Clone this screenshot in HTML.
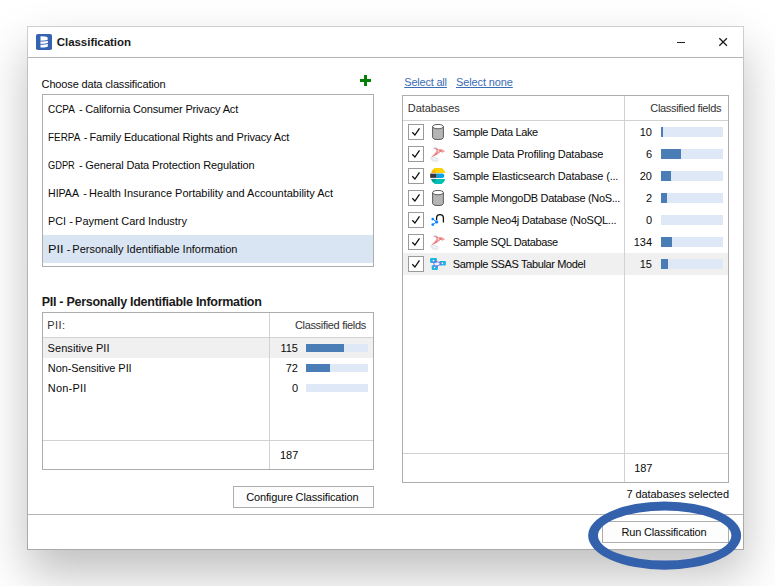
<!DOCTYPE html>
<html><head><meta charset="utf-8"><title>Classification</title>
<style>
html,body{margin:0;padding:0;background:#fff;}
body{width:775px;height:586px;position:relative;overflow:hidden;font-family:"Liberation Sans",sans-serif;font-size:11px;color:#0a0a0a;}
.abs{position:absolute;}
.t{position:absolute;white-space:nowrap;line-height:14px;height:14px;}
#win{left:27px;top:26px;width:715px;height:522px;border:1px solid #b4b4b4;border-image:linear-gradient(to bottom,#d0d0d0 0,#c2c2c2 8%,#b8b8b8 25%,#b0b0b0 60%,#a9a9a9 100%) 1;background:#fff;box-shadow:0 24px 44px rgba(0,0,0,.25);}
.hl{position:absolute;height:1px;background:#b4b4b4;}
.vl{position:absolute;width:1px;background:#d2d2d2;}
.box{position:absolute;border:1px solid #adadad;background:#fff;box-sizing:border-box;}
.bar{position:absolute;background:#dfe8f6;width:62px;}
.bar i{position:absolute;left:0;top:0;bottom:0;background:#4a7db6;display:block;}
.num{position:absolute;text-align:right;white-space:nowrap;line-height:14px;height:14px;}
.cb{position:absolute;width:14px;height:14px;border:1px solid #9a9a9a;background:#fff;}
.btn{position:absolute;box-sizing:border-box;border:1px solid #adadad;background:#fdfdfd;text-align:center;white-space:nowrap;}
a.lnk{color:#3b6db5;text-decoration:underline;}
</style></head><body>
<div id="win" class="abs"></div>

<!-- title bar -->
<svg class="abs" style="left:36px;top:34px" width="16" height="16" viewBox="0 0 16 16">
<rect x="0" y="0" width="16" height="16" rx="1.8" fill="#3563b2"/>
<path d="M4.5 2.2 Q8.6 2 11.3 3.1 Q12 4.6 11.6 6 Q12.2 7.5 11.8 9 Q12.2 11 11.6 12.7 Q8.6 13.7 4.5 13.6 Z" fill="#fff"/>
<path d="M4.3 7.15 Q8.6 7.3 12 6.3 M4.3 10.4 Q8.6 10.4 12 9.45" stroke="#3563b2" stroke-width=".95" fill="none"/>
</svg>
<div class="abs" style="left:677px;top:42px;width:8px;height:1px;background:#222"></div>
<svg class="abs" style="left:718px;top:37px" width="10" height="10" viewBox="0 0 10 10"><path d="M1.3 1.2 L8.9 8.8 M8.9 1.2 L1.3 8.8" stroke="#1a1a1a" stroke-width="1.25" fill="none"/></svg>
<div class="hl" style="left:28px;top:57px;width:715px;"></div>

<!-- left top -->
<svg class="abs" style="left:360px;top:75px" width="11" height="11" viewBox="0 0 11 11" shape-rendering="crispEdges"><path d="M4 0h3v4h4v3h-4v4h-3v-4h-4v-3h4z" fill="#058005"/></svg>
<div class="box" style="left:42px;top:94px;width:332px;height:173px;"></div>
<div class="abs" style="left:43px;top:235px;width:330px;height:28px;background:#d9e5f3"></div>

<!-- left bottom -->
<div class="box" style="left:42px;top:312px;width:332px;height:158px;"></div>
<div class="abs" style="left:43px;top:338px;width:330px;height:20px;background:#f0f0f0"></div>
<div class="hl" style="left:43px;top:337px;width:330px;background:#d2d2d2"></div>
<div class="hl" style="left:43px;top:440px;width:330px;background:#d2d2d2"></div>
<div class="vl" style="left:269px;top:313px;height:156px;"></div>
<div class="num" style="left:270px;width:28px;top:341px;">115</div>
<div class="num" style="left:270px;width:28px;top:361px;">72</div>
<div class="num" style="left:270px;width:28px;top:381px;">0</div>
<div class="bar" style="left:306px;top:344px;height:8px"><i style="width:38px"></i></div>
<div class="bar" style="left:306px;top:364px;height:8px"><i style="width:24px"></i></div>
<div class="bar" style="left:306px;top:384px;height:8px"></div>
<div class="t" style="left:280px;top:448px;">187</div>
<div class="btn" id="b1" style="left:233px;top:486px;width:141px;height:22px;line-height:20px;"></div>

<div class="hl" style="left:28px;top:514px;width:715px;"></div>

<!-- right -->
<div class="box" style="left:402px;top:95px;width:327px;height:388px;"></div>
<div class="abs" style="left:403px;top:253px;width:325px;height:22px;background:#f0f0f0"></div>
<div class="hl" style="left:403px;top:120px;width:325px;background:#d2d2d2"></div>
<div class="hl" style="left:403px;top:453px;width:325px;background:#d2d2d2"></div>
<div class="vl" style="left:624px;top:96px;height:386px;"></div>
<div class="cb" style="left:408px;top:124px"></div>
<svg class="abs" style="left:408px;top:124px" width="16" height="16" viewBox="0 0 16 16"><path d="M4.3 8.3 L6.9 11 L11.5 4.4" fill="none" stroke="#0a0a0a" stroke-width="1.25"/></svg>
<svg class="abs" style="left:430px;top:124px" width="16" height="16" viewBox="0 0 16 16"><path d="M2.6 2.6 V13.6 A5.4 2 0 0 0 13.4 13.6 V2.6 Z" fill="#b5b5b5" stroke="#5c5c5c" stroke-width="1"/><ellipse cx="8" cy="2.6" rx="5.4" ry="2.2" fill="#ffffff" stroke="#5c5c5c" stroke-width="1"/></svg>
<div class="num" style="left:625px;width:27px;top:125px;">10</div>
<div class="bar" style="left:661px;top:127px;height:10px"><i style="width:2px"></i></div>
<div class="cb" style="left:408px;top:146px"></div>
<svg class="abs" style="left:408px;top:146px" width="16" height="16" viewBox="0 0 16 16"><path d="M4.3 8.3 L6.9 11 L11.5 4.4" fill="none" stroke="#0a0a0a" stroke-width="1.25"/></svg>
<svg class="abs" style="left:430px;top:146px" width="16" height="16" viewBox="0 0 16 16"><path d="M3 1.1 Q5 .2 7 1 Q6.8 1.9 5 2 Q3.4 1.9 3 1.1Z" fill="#cfe0ea" opacity=".9"/><path d="M3.1 2 Q5 2.3 6.6 1.9 Q7.6 2.6 8.4 3.4 Q10.4 2.9 12 3.6 Q14 4.4 14.9 6.3 Q13.4 5.6 12.2 5.5 Q13 6.2 13 6.9 Q11.6 5.8 10.2 6 Q8.8 7.4 7.2 8.4 Q5 9.8 2.2 10.9 Q1.6 10.6 1.9 10.2 Q4.6 8 6.3 5.6 Q6.9 4.4 5.4 3.3 Q4 3 3.1 2Z" fill="#e03434" opacity=".68"/><path d="M2 10.4 L8.6 4.2 M4.6 3 L10.4 6.2 M9 3.4 L7.6 8 M11.6 3.8 L12.6 6" stroke="#fff" stroke-width=".55" opacity=".75" fill="none"/><path d="M0 12 Q.8 10.4 3 10.6 Q6 10.6 8 12.4 Q9 14 8 15.4 Q5.6 16.3 3 15.4 Q.4 14.2 0 12Z" fill="#b4c0ce" opacity=".42"/><path d="M.6 12.6 L7.6 13.6 M2.6 10.8 L6.4 15.8 M5.6 11.2 L2.6 15.2" stroke="#fff" stroke-width=".55" opacity=".8" fill="none"/></svg>
<div class="num" style="left:625px;width:27px;top:147px;">6</div>
<div class="bar" style="left:661px;top:149px;height:10px"><i style="width:20px"></i></div>
<div class="cb" style="left:408px;top:168px"></div>
<svg class="abs" style="left:408px;top:168px" width="16" height="16" viewBox="0 0 16 16"><path d="M4.3 8.3 L6.9 11 L11.5 4.4" fill="none" stroke="#0a0a0a" stroke-width="1.25"/></svg>
<svg class="abs" style="left:430px;top:168px" width="16" height="16" viewBox="0 0 16 16"><path d="M1.1 5 A7.3 7.3 0 0 1 15.2 4.4 Q15 5 14.4 5 Z" fill="#fed10a"/><path d="M1.1 5 A7.3 7.3 0 0 1 4.2 1.6 Q6 3 6.2 5 Z" fill="#f9b110"/><path d="M0 5.5 H6.9 V10.1 H0 Q-.3 7.8 0 5.5Z" fill="#343741" stroke="#cfcfd2" stroke-width=".5"/><path d="M6.9 5.4 H12 A2.35 2.35 0 0 1 12 10.1 H6.9 Z" fill="#07a5e6"/><path d="M1.1 10.9 H14.4 Q15 10.9 15.2 11.5 A7.3 7.3 0 0 1 1.1 10.9 Z" fill="#00bfb3"/><path d="M1.1 10.9 H6.2 Q6 13 4.2 14.4 A7.3 7.3 0 0 1 1.1 10.9Z" fill="#019b8f"/></svg>
<div class="num" style="left:625px;width:27px;top:169px;">20</div>
<div class="bar" style="left:661px;top:171px;height:10px"><i style="width:10px"></i></div>
<div class="cb" style="left:408px;top:190px"></div>
<svg class="abs" style="left:408px;top:190px" width="16" height="16" viewBox="0 0 16 16"><path d="M4.3 8.3 L6.9 11 L11.5 4.4" fill="none" stroke="#0a0a0a" stroke-width="1.25"/></svg>
<svg class="abs" style="left:430px;top:190px" width="16" height="16" viewBox="0 0 16 16"><path d="M2.6 2.6 V13.6 A5.4 2 0 0 0 13.4 13.6 V2.6 Z" fill="#b5b5b5" stroke="#5c5c5c" stroke-width="1"/><ellipse cx="8" cy="2.6" rx="5.4" ry="2.2" fill="#ffffff" stroke="#5c5c5c" stroke-width="1"/></svg>
<div class="num" style="left:625px;width:27px;top:191px;">2</div>
<div class="bar" style="left:661px;top:193px;height:10px"><i style="width:6px"></i></div>
<div class="cb" style="left:408px;top:212px"></div>
<svg class="abs" style="left:408px;top:212px" width="16" height="16" viewBox="0 0 16 16"><path d="M4.3 8.3 L6.9 11 L11.5 4.4" fill="none" stroke="#0a0a0a" stroke-width="1.25"/></svg>
<svg class="abs" style="left:430px;top:212px" width="16" height="16" viewBox="0 0 16 16"><path d="M6.6 8 V6.1 A3.4 3.4 0 0 1 13.4 6.1 V10.5" fill="none" stroke="#111" stroke-width="1.3"/><path d="M2.75 7.05 L6.65 9.9 L2.75 12.6" fill="none" stroke="#0b84ff" stroke-width=".9"/><circle cx="2.75" cy="7.05" r="1.35" fill="#0b84ff"/><circle cx="2.75" cy="12.6" r="1.35" fill="#0b84ff"/><circle cx="6.65" cy="9.9" r="1.6" fill="#0b84ff"/></svg>
<div class="num" style="left:625px;width:27px;top:213px;">0</div>
<div class="bar" style="left:661px;top:215px;height:10px"></div>
<div class="cb" style="left:408px;top:234px"></div>
<svg class="abs" style="left:408px;top:234px" width="16" height="16" viewBox="0 0 16 16"><path d="M4.3 8.3 L6.9 11 L11.5 4.4" fill="none" stroke="#0a0a0a" stroke-width="1.25"/></svg>
<svg class="abs" style="left:430px;top:234px" width="16" height="16" viewBox="0 0 16 16"><path d="M3 1.1 Q5 .2 7 1 Q6.8 1.9 5 2 Q3.4 1.9 3 1.1Z" fill="#cfe0ea" opacity=".9"/><path d="M3.1 2 Q5 2.3 6.6 1.9 Q7.6 2.6 8.4 3.4 Q10.4 2.9 12 3.6 Q14 4.4 14.9 6.3 Q13.4 5.6 12.2 5.5 Q13 6.2 13 6.9 Q11.6 5.8 10.2 6 Q8.8 7.4 7.2 8.4 Q5 9.8 2.2 10.9 Q1.6 10.6 1.9 10.2 Q4.6 8 6.3 5.6 Q6.9 4.4 5.4 3.3 Q4 3 3.1 2Z" fill="#e03434" opacity=".68"/><path d="M2 10.4 L8.6 4.2 M4.6 3 L10.4 6.2 M9 3.4 L7.6 8 M11.6 3.8 L12.6 6" stroke="#fff" stroke-width=".55" opacity=".75" fill="none"/><path d="M0 12 Q.8 10.4 3 10.6 Q6 10.6 8 12.4 Q9 14 8 15.4 Q5.6 16.3 3 15.4 Q.4 14.2 0 12Z" fill="#b4c0ce" opacity=".42"/><path d="M.6 12.6 L7.6 13.6 M2.6 10.8 L6.4 15.8 M5.6 11.2 L2.6 15.2" stroke="#fff" stroke-width=".55" opacity=".8" fill="none"/></svg>
<div class="num" style="left:625px;width:27px;top:235px;">134</div>
<div class="bar" style="left:661px;top:237px;height:10px"><i style="width:11px"></i></div>
<div class="cb" style="left:408px;top:256px"></div>
<svg class="abs" style="left:408px;top:256px" width="16" height="16" viewBox="0 0 16 16"><path d="M4.3 8.3 L6.9 11 L11.5 4.4" fill="none" stroke="#0a0a0a" stroke-width="1.25"/></svg>
<svg class="abs" style="left:430px;top:256px" width="16" height="16" viewBox="0 0 16 16"><rect x=".1" y="2.1" width="6.8" height="4.8" rx=".8" fill="#1cb4df"/><rect x="9.5" y="5.1" width="6.4" height="4.5" rx=".8" fill="#1cb4df"/><rect x="1.7" y="9.3" width="6.2" height="4.6" rx=".8" fill="#1cb4df"/><path d="M3.5 4.6 L12.4 7.4 L4.6 11.5 Z" fill="none" stroke="#8b5cf0" stroke-width=".9"/><circle cx="3.5" cy="4.6" r=".8" fill="#fff"/><circle cx="12.4" cy="7.4" r=".8" fill="#fff"/><circle cx="4.6" cy="11.5" r=".8" fill="#fff"/></svg>
<div class="num" style="left:625px;width:27px;top:257px;">15</div>
<div class="bar" style="left:661px;top:259px;height:10px"><i style="width:7px"></i></div>
<div class="t" style="left:634.3px;top:461px;letter-spacing:-0.15px">187</div>
<div class="btn" id="b2" style="left:602px;top:521px;width:127px;height:22px;line-height:20px;"></div>
<svg class="abs" style="left:580px;top:495px" width="170" height="85" viewBox="0 0 170 85"><path fill-rule="evenodd" fill="#3461ac" d="M8.15 40.6 A76.5 34.1 0 1 0 161.15 40.6 A76.5 34.1 0 1 0 8.15 40.6 Z M17.95 40.6 A66.7 25.0 0 1 0 151.35 40.6 A66.7 25.0 0 1 0 17.95 40.6 Z"/></svg>
<div class="t" id="title" style="left:56.71px;top:35px;letter-spacing:-0.034px;font-weight:bold;font-size:11.5px;color:#1a1a1a">Classification</div>
<div class="t" id="choose" style="left:41.60px;top:77px;letter-spacing:-0.149px;">Choose data classification</div>
<div class="t" id="li0a" style="left:48.14px;top:102px;letter-spacing:0.000px;transform:scaleX(0.9038);transform-origin:0 0;">CCPA</div>
<div class="t" id="li0d" style="left:79.03px;top:102px;letter-spacing:0.628px;">-</div>
<div class="t" id="li0b" style="left:85.24px;top:102px;letter-spacing:-0.158px;">California Consumer Privacy Act</div>
<div class="t" id="li1a" style="left:48.16px;top:130px;letter-spacing:0.000px;transform:scaleX(0.8992);transform-origin:0 0;">FERPA</div>
<div class="t" id="li1d" style="left:83.78px;top:130px;letter-spacing:0.528px;">-</div>
<div class="t" id="li1b" style="left:89.56px;top:130px;letter-spacing:-0.157px;">Family Educational Rights and Privacy Act</div>
<div class="t" id="li2a" style="left:48.36px;top:158px;letter-spacing:0.000px;transform:scaleX(0.8411);transform-origin:0 0;">GDPR</div>
<div class="t" id="li2d" style="left:79.03px;top:158px;letter-spacing:0.628px;">-</div>
<div class="t" id="li2b" style="left:85.26px;top:158px;letter-spacing:-0.131px;">General Data Protection Regulation</div>
<div class="t" id="li3a" style="left:47.88px;top:186px;letter-spacing:0.000px;transform:scaleX(0.9630);transform-origin:0 0;">HIPAA</div>
<div class="t" id="li3d" style="left:83.16px;top:186px;letter-spacing:0.628px;">-</div>
<div class="t" id="li3b" style="left:89.10px;top:186px;letter-spacing:-0.012px;">Health Insurance Portability and Accountability Act</div>
<div class="t" id="li4a" style="left:47.90px;top:214px;letter-spacing:0.000px;transform:scaleX(0.9794);transform-origin:0 0;">PCI</div>
<div class="t" id="li4d" style="left:69.16px;top:214px;letter-spacing:0.628px;">-</div>
<div class="t" id="li4b" style="left:75.10px;top:214px;letter-spacing:-0.032px;">Payment Card Industry</div>
<div class="t" id="li5a" style="left:48.00px;top:242px;letter-spacing:0.000px;transform:scaleX(1.1562);transform-origin:0 0;">PII</div>
<div class="t" id="li5d" style="left:66.75px;top:242px;letter-spacing:0.628px;">-</div>
<div class="t" id="li5b" style="left:72.34px;top:242px;letter-spacing:-0.016px;">Personally Identifiable Information</div>
<div class="t" id="h2" style="left:41.74px;top:295px;letter-spacing:-0.280px;font-weight:bold;font-size:12.5px;color:#1a1a1a">PII - Personally Identifiable Information</div>
<div class="t" id="piih" style="left:47.33px;top:318px;letter-spacing:0.414px;color:#333">PII:</div>
<div class="t" id="cf1" style="left:294.88px;top:318px;letter-spacing:-0.316px;color:#333">Classified fields</div>
<div class="t" id="r1" style="left:47.61px;top:341px;letter-spacing:0.063px;">Sensitive PII</div>
<div class="t" id="r2" style="left:47.78px;top:361px;letter-spacing:-0.067px;">Non-Sensitive PII</div>
<div class="t" id="r3" style="left:47.78px;top:381px;letter-spacing:0.221px;">Non-PII</div>
<div class="t" id="b1t" style="left:246.17px;top:490px;letter-spacing:-0.131px;">Configure Classification</div>
<div class="t" id="sa" style="left:404.26px;top:75px;letter-spacing:-0.204px;color:#3b6db5;text-decoration:underline">Select all</div>
<div class="t" id="sn" style="left:455.98px;top:75px;letter-spacing:-0.118px;color:#3b6db5;text-decoration:underline">Select none</div>
<div class="t" id="dbh" style="left:407.77px;top:101px;letter-spacing:-0.065px;color:#333">Databases</div>
<div class="t" id="cf2" style="left:650.27px;top:101px;letter-spacing:-0.323px;color:#333">Classified fields</div>
<div class="t" id="db0" style="left:452.86px;top:125px;letter-spacing:-0.343px;">Sample Data Lake</div>
<div class="t" id="db1" style="left:452.86px;top:147px;letter-spacing:-0.208px;">Sample Data Profiling Database</div>
<div class="t" id="db2" style="left:452.86px;top:169px;letter-spacing:-0.189px;">Sample Elasticsearch Database (...</div>
<div class="t" id="db3" style="left:452.86px;top:191px;letter-spacing:-0.308px;">Sample MongoDB Database (NoS...</div>
<div class="t" id="db4" style="left:452.86px;top:213px;letter-spacing:-0.251px;">Sample Neo4j Database (NoSQL...</div>
<div class="t" id="db5" style="left:452.86px;top:235px;letter-spacing:-0.379px;">Sample SQL Database</div>
<div class="t" id="db6" style="left:452.86px;top:257px;letter-spacing:-0.367px;">Sample SSAS Tabular Model</div>
<div class="t" id="sel" style="left:626.45px;top:487px;letter-spacing:-0.073px;">7 databases selected</div>
<div class="t" id="b2t" style="left:621.54px;top:525px;letter-spacing:-0.174px;">Run Classification</div>
</body></html>
